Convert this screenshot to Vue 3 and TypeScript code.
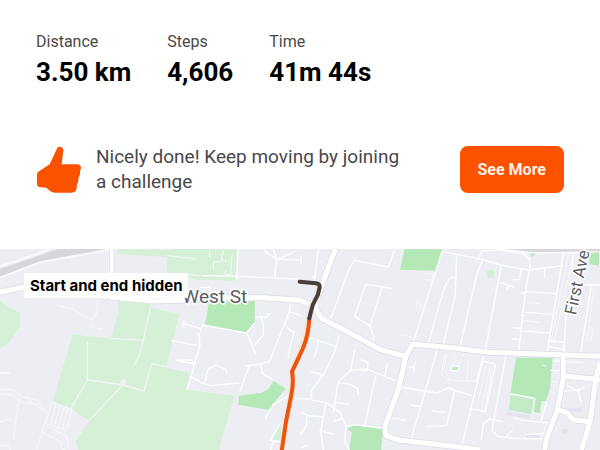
<script setup lang="ts">
interface Stat {
  label: string
  value: string
}

const stats: Stat[] = [
  { label: 'Distance', value: '3.50 km' },
  { label: 'Steps', value: '4,606' },
  { label: 'Time', value: '41m 44s' },
]

const lightParks: string[] = [
  'M0 165L18 182L60 203V245L28 290L0 312Z',
  'M350 12H712L706 107L590 104L500 84V37L350 26Z',
  'M355 160L452 172L456 190L538 208L498 368L572 384L556 434L704 452L660 600V615H236L227 588L268 528L210 490L158 470L218 267L250 272L332 280L354 210Z',
  'M1460 77L1477 73L1484 82L1482 98L1466 101L1459 90Z',
  'M829 550L842 534L843 585H820Z',
]

const midParks: string[] = ['M1532 450L1604 462L1594 508L1527 494Z']

const greenParks: string[] = [
  'M627 172L765 164L764 234L740 262L703 260L615 240Z',
  'M717 452L785 443L805 432L820 407L856 431L806 495L715 479Z',
  'M1214 12H1327L1306 77L1200 74Z',
  'M1548 338H1658L1650 430L1638 468H1624L1620 505L1601 501L1604 460L1531 448Z',
  'M1770 24L1797 22V62L1768 58Z',
  'M1040 552L1062 541L1148 552L1144 615H1047L1056 562Z',
  'M1588 26L1606 25L1598 36Z',
]

const paths: string[] = [
  'M262 290V405L370 420L432 438L455 355',
  'M262 405L214 488L204 550',
  'M452 186L430 285L418 330L402 362',
  'M332 280L430 286',
  'M370 418L268 526',
  'M455 357L500 365',
  'M175 183L215 190L245 210L278 224L272 244L308 254M294 160L290 205L278 224',
  'M500 32L588 42M508 85L600 92',
  'M0 434L28 432L50 440L66 456L108 464L130 492L145 510L132 540L110 615',
  'M0 446L40 450L60 470L108 478L128 500M60 456L48 520L40 585M132 540L160 552L200 575L206 600L190 615M122 560L180 590L188 615M0 530L32 522M80 450L96 474M0 600L24 602L30 615',
  'M156 472L136 536M168 478L150 544M180 482L162 548M192 486L174 552M204 490L186 554M216 494L198 556M156 472L218 494M136 536L198 556',
]

const minorRoads: string[] = [
  'M0 384H28',
  'M714 12L710 104M604 92L712 94L892 102',
  'M794 12L798 22L830 42L824 98M830 42L904 46M904 30V60M820 12L830 42M838 40L884 20',
  'M955 12L944 103M938 92L946 103',
  'M1184 12L1166 66L1064 46L1048 70L990 226',
  'M1177 130L1098 118L1064 214L1110 243L1122 275L1116 298',
  'M1064 214L1074 219M1147 124L1110 243',
  'M600 128L632 126M630 126V148',
  'M600 260L608 240L740 264L764 320L768 328M740 262L764 234',
  'M764 218L782 214L790 236L790 270L764 300M782 214L798 218L808 208L800 206',
  'M872 172L868 200L808 350L748 362L782 358L788 386L818 404',
  'M868 200L904 212M860 248L882 262L864 330M864 330L868 338',
  'M748 362L720 440M748 362L738 362M600 412L634 422L718 414',
  'M614 412L624 374L646 360L676 372L680 382',
  'M552 226L548 248M552 236L600 250M515 286L592 302M528 346L576 344L580 356L526 346M595 262L600 300L562 434M568 394L600 410',
  'M932 278L1006 304M956 288L944 336M1020 268L1002 324L972 386L932 440L936 466L978 472L1020 502L1038 544L1034 590L1048 615',
  'M932 380L970 390L962 394M880 460L932 462M978 472L962 560L970 615',
  'M904 502L924 512L970 516M920 512V540L902 568M958 556L1004 568M904 608L924 600',
  'M860 456L820 478L796 520M842 534L824 562L810 586L842 590M842 590H820L812 615',
  'M1082 344L1104 352L1102 376L1086 378M1064 314L1052 376L1014 412L1006 466L1000 502M1052 376L1100 372L1200 412M1014 412L1050 418L1072 430L1076 450M1006 472L1048 478M1162 354L1154 396',
  'M1128 390L1094 540M1000 530L1030 520M1168 520H1200',
  'M1038 544L1060 538L1150 550',
  'M1330 20L1450 44L1500 60L1590 76L1604 72L1690 62',
  'M1434 44L1446 18L1500 14L1570 26L1588 42L1590 76',
  'M1326 20L1238 298',
  'M1370 28L1366 150L1330 300M1366 96L1348 100L1332 130L1286 292',
  'M1448 44L1430 90L1380 306M1504 60L1456 316M1588 76L1576 140L1556 320M1690 26L1642 320',
  'M1500 112L1540 126M1528 122L1520 134M1564 72L1558 104L1538 104M1634 70V98',
  'M1578 140L1672 146M1576 202L1660 208M1568 258L1652 264M1562 144H1578M1562 212H1572M1538 248L1566 250M1536 282L1556 282M1646 288L1694 292L1690 326M1646 304L1694 314',
  'M1698 205L1692 325M1774 124L1742 325M1742 120H1800M1720 24L1716 80',
  'M1312 314L1234 580M1200 426L1312 444L1346 428L1370 438L1416 452M1364 436L1340 542L1276 544M1296 498L1340 502M1228 480L1258 484',
  'M1452 334L1382 615M1452 350L1484 356M1446 348L1430 410M1518 334L1480 530L1476 558L1494 574L1540 580L1640 582',
  'M1408 490L1456 500L1486 360',
  'M1444 586L1450 536L1468 522L1510 530M1540 518L1570 526L1648 534M1576 568L1638 566M1520 580L1524 568L1538 556',
  'M1212 362L1240 368L1248 350M1240 368L1244 382M1200 525H1220',
  'M1700 420L1734 438L1754 426M1734 438L1744 470M1690 440L1740 434M1700 350L1750 352M1658 350L1680 346M1650 376H1684',
  'M1640 470L1624 528M1532 446L1604 460L1598 506',
]

const fineRoads: string[] = [
  'M630 12L628 38M672 12L664 40L672 46M640 52L680 46L696 58M640 52V74M672 12L692 10M696 30L692 90L674 86M672 86L680 74',
  'M1250 174L1256 168L1264 178L1256 198L1248 190ZM1274 84L1298 86L1296 106L1276 104M1200 268L1234 276L1228 286',
  'M1334 326L1324 388L1340 402L1370 408L1430 408M1340 326L1332 370L1348 400M1406 350L1400 404M1458 360L1430 492M1470 362L1444 494M1478 366L1452 498',
  'M1366 324L1360 362M1390 326L1378 364',
  'M1718 36L1662 290M1706 24L1654 286M1782 124L1760 290M1764 246L1780 250L1772 290',
  'M1580 172L1620 176M1576 226L1624 234M1610 316L1604 322M1626 360L1640 364',
  'M1658 380L1674 382M1656 410H1670M1652 440L1666 444M1640 540L1622 582M1632 556L1644 560M1630 500L1624 520',
]

const arterials: string[] = [
  'M0 142L80 124M330 156L460 168L540 166L654 158L790 158L900 166L944 186L964 220L1080 280L1142 314L1200 330L1218 332',
  'M1006 12L970 108L944 186',
  'M1218 332L1238 298L1356 308L1466 322L1640 328L1800 334',
  'M1218 332L1196 430L1154 546L1158 572L1200 586L1380 606L1440 615',
  'M1690 332L1690 400L1670 500L1640 580L1634 615',
  'M1690 392L1800 404M1670 494L1700 502L1718 524L1770 530M1800 352L1788 400L1770 530L1752 590L1744 615',
]
</script>

<template>
  <main class="activity">
    <dl class="stats">
      <div v-for="stat in stats" :key="stat.label" class="stat">
        <dt>{{ stat.label }}</dt>
        <dd>{{ stat.value }}</dd>
      </div>
    </dl>

    <section class="challenge">
      <svg class="thumb" viewBox="-2 0 135 141" aria-hidden="true">
        <path
          d="M62 5C68-1 80 3 80 13L75 55H121C131 55 135 62 132 70L130 76C131 84 129 91 125 96C126 105 124 112 120 117C122 130 117 140 105 140H54C44 140 39 133 29 125L7 123Q1 122 1 115V84Q1 80 5 77L39 55Z"
        />
      </svg>
      <p>Nicely done! Keep moving by joining a challenge</p>
      <button type="button">See More</button>
    </section>

    <section class="map">
      <svg class="map-canvas" viewBox="0 12 1800 603" role="img" aria-label="Route map">
        <rect class="land" y="12" width="1800" height="603" />
        <path class="rail" d="M0 72L100 38L174 12H330L120 50L0 98ZM1510 12H1800V24H1600Z" />
        <path class="rail-edge" d="M0 64L90 34L150 12M0 98L120 52L328 14M1500 14L1600 24L1800 22" />
        <path v-for="d in lightParks" :key="d" class="park-light" :d="d" />
        <path v-for="d in midParks" :key="d" class="park-mid" :d="d" />
        <path v-for="d in greenParks" :key="d" class="park" :d="d" />
        <path class="building" d="M1520 500L1590 510L1586 520L1518 510ZM1580 560L1620 572L1616 586L1578 576ZM1684 552H1702V568H1684ZM1700 488H1750V500H1700Z" />
        <path v-for="d in paths" :key="d" class="footpath" :d="d" />
        <circle class="junction" cx="370" cy="412" r="9" />
        <path v-for="d in fineRoads" :key="d" class="fine" :d="d" />
        <path v-for="d in minorRoads" :key="d" class="minor" :d="d" />
        <path class="casing-local" d="M335 12V92" />
        <path class="local" d="M335 12V92" />
        <path v-for="d in arterials" :key="'casing' + d" class="casing" :d="d" />
        <path v-for="d in arterials" :key="d" class="arterial" :d="d" />
        <rect class="plaza" x="1354" y="364" width="22" height="13" />
        <path class="route-halo" d="M958 122L954 150L934 185L928 222L916 280L876 380L878 430L860 520L844 625" />
        <path class="route" d="M928 218C927 250 922 280 908 312L876 380C880 400 878 430 874 450L858 530L844 625" />
        <path class="route-hidden" d="M899 110L948 115Q960 117 959 126L954 148L939 178L934 196L928 220" />
        <text class="road-name" x="547" y="173">West St</text>
        <text class="road-name avenue" transform="translate(1728 212) rotate(-78)">First Ave</text>
      </svg>
      <span class="privacy">Start and end hidden</span>
    </section>
  </main>
</template>

<style>
body {
  margin: 0;
  background: #fff;
}
</style>

<style scoped>
.activity {
  font-family: Roboto, "Liberation Sans", sans-serif;
  color: #000;
}

.stats {
  display: flex;
  gap: 36px;
  margin: 0;
  padding: 32px 36px 0;
}

.stat dt {
  font-size: 16px;
  line-height: 20px;
  color: #484848;
}

.stat dd {
  margin: 4px 0 0;
  font-size: 26px;
  font-weight: 700;
  line-height: 33px;
}

.challenge {
  display: flex;
  align-items: center;
  padding: 55px 36px;
}

.thumb {
  flex: none;
  width: 45px;
  height: 47px;
  fill: #fc5200;
}

.challenge p {
  flex: 1;
  margin: 0 56px 0 15px;
  font-size: 19px;
  line-height: 25px;
  color: #484848;
}

.challenge button {
  flex: none;
  padding: 12px 18px;
  border: 0;
  border-radius: 8px;
  background: #fc5200;
  color: #fff3e8;
  font: 700 16px/23px Roboto, "Liberation Sans", sans-serif;
}

.map {
  position: relative;
}

.map-canvas {
  display: block;
  width: 100%;
  height: auto;
}

.map-canvas path {
  stroke-linejoin: round;
}

.land { fill: #edeef4; }
.rail { fill: #d6d6dc; }
.rail-edge { fill: none; stroke: #fafafc; stroke-width: 6; }
.park-light { fill: #d6f0d8; }
.park-mid { fill: #c2ecc5; }
.park { fill: #b4e8b6; }
.building { fill: #e2e3ef; }
.footpath { fill: none; stroke: #f6f8fa; stroke-width: 4; opacity: 0.8; }
.junction { fill: #edf4f0; }
.fine { fill: none; stroke: #f8f9fc; stroke-width: 3; }
.minor { fill: none; stroke: #fff; stroke-width: 4; }
.casing-local { fill: none; stroke: #dfe1ea; stroke-width: 16; }
.local { fill: none; stroke: #fff; stroke-width: 11; }
.casing { fill: none; stroke: #dcdee8; stroke-width: 20; }
.arterial { fill: none; stroke: #fff; stroke-width: 15; }
.plaza { fill: #c2ecc5; stroke: #fff; stroke-width: 4; }
.route-halo { fill: none; stroke: #fbe3d4; stroke-width: 18; }
.route { fill: none; stroke: #ea560e; stroke-width: 12; }
.route-hidden { fill: none; stroke: #45403e; stroke-width: 12; stroke-linecap: round; }

.road-name {
  fill: #5c5c62;
  stroke: #fff;
  stroke-width: 9;
  stroke-linejoin: round;
  paint-order: stroke;
  font-size: 57px;
}

.avenue {
  font-size: 51px;
}

.privacy {
  position: absolute;
  top: 24px;
  left: 24px;
  padding: 0 6px;
  border-radius: 2px;
  background: #fff;
  font-family: Inter, Roboto, sans-serif;
  font-size: 15px;
  font-weight: 700;
  line-height: 25px;
}
</style>
